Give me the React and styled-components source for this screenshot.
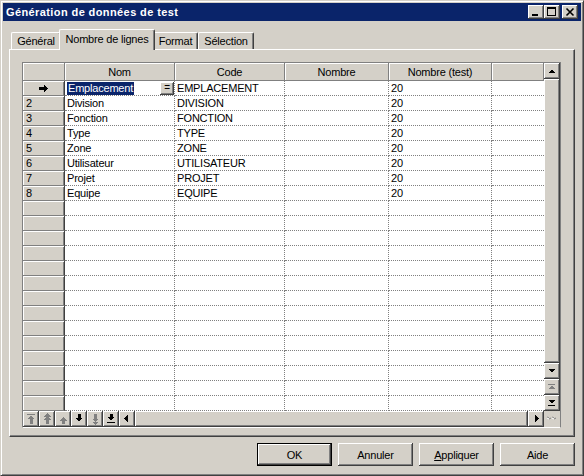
import React from 'react';
import styled, { createGlobalStyle } from 'styled-components';

const GlobalStyle = createGlobalStyle`
  html, body { margin: 0; padding: 0; background: #d4d0c8; }
  body { font-family: "Liberation Sans", Arial, sans-serif; font-size: 11px; color: #000; letter-spacing: -0.2px; }
  * { box-sizing: border-box; }
`;

const raised = `
  background: #d4d0c8;
  box-shadow: inset -1px -1px 0 #404040, inset 1px 1px 0 #fff, inset -2px -2px 0 #808080;
`;

const Window = styled.div`
  width: 584px;
  height: 476px;
  display: flex;
  flex-direction: column;
  border: 1px solid;
  border-color: #d4d0c8 #404040 #404040 #d4d0c8;
  box-shadow: inset 1px 1px 0 #fff, inset -1px -1px 0 #808080;
  padding: 2px;
  background: #d4d0c8;
`;

const TitleBar = styled.div`
  height: 18px;
  flex: none;
  background: #0a246a;
  display: flex;
  align-items: center;
  padding: 0 3px 0 3px;
`;

const Title = styled.div`
  flex: 1;
  color: #fff;
  font-weight: bold;
  font-size: 11px;
  letter-spacing: 0.4px;
  white-space: nowrap;
`;

const CaptionButton = styled.div`
  width: 16px;
  height: 14px;
  ${raised}
  display: flex;
  align-items: center;
  justify-content: center;
  margin-left: ${p => p.$gap || 0}px;
`;

const Body = styled.div`
  flex: 1;
  display: flex;
  flex-direction: column;
  padding: 8px 6px 0 6px;
`;

const TabStrip = styled.div`
  height: 20px;
  display: flex;
  align-items: flex-end;
  padding-left: 2px;
  position: relative;
  z-index: 2;
`;

const Tab = styled.div`
  position: relative;
  width: ${p => p.$w}px;
  height: ${p => (p.$active ? 21 : 17)}px;
  margin: ${p => (p.$active ? '0 -2px -1px -2px' : '0')};
  z-index: ${p => (p.$active ? 2 : 1)};
  background: #d4d0c8;
  border-top: 1px solid #fff;
  border-left: 1px solid #fff;
  border-right: 1px solid #404040;
  border-radius: 2px 2px 0 0;
  box-shadow: inset -1px 0 0 #808080;
  display: flex;
  justify-content: center;
  align-items: flex-start;
  padding-top: ${p => (p.$active ? 3 : 2)}px;
  line-height: 13px;
  white-space: nowrap;
`;

const Panel = styled.div`
  height: 388px;
  flex: none;
  display: flex;
  flex-direction: column;
  border: 1px solid;
  border-color: #fff #404040 #404040 #fff;
  box-shadow: inset -1px -1px 0 #808080;
  padding: 12px 13px 14px 12px;
  position: relative;
  z-index: 1;
`;

const GridFrame = styled.div`
  flex: 1;
  display: flex;
  flex-direction: column;
  border: 1px solid;
  border-color: #808080 #808080 #fff #808080;
  background: #d4d0c8;
`;

const GridMain = styled.div`
  flex: 1;
  display: flex;
  min-height: 0;
`;

const Table = styled.div`
  flex: 1;
  overflow: hidden;
  background: #fff;
  display: grid;
  grid-template-columns: 42px 110px 110px 104px 103px 1fr;
  grid-template-rows: 18px;
  grid-auto-rows: 15px;
  align-content: start;
`;

const HeaderCell = styled.div`
  background: #d4d0c8;
  border-right: 1px solid #808080;
  border-bottom: 1px solid #808080;
  box-shadow: inset 1px 1px 0 #fff;
  display: flex;
  align-items: center;
  justify-content: center;
  white-space: nowrap;
  overflow: hidden;
  line-height: 14px;
`;

const RowHeader = styled.div`
  background: #d4d0c8;
  border-right: 1px solid #404040;
  border-bottom: 1px solid #808080;
  box-shadow: inset 1px 1px 0 #fff, inset -1px 0 0 #808080;
  display: flex;
  align-items: center;
  justify-content: ${p => (p.$current ? 'center' : 'flex-start')};
  padding-left: ${p => (p.$current ? 0 : 3)}px;
  line-height: 14px;
  overflow: hidden;
`;

const Cell = styled.div`
  border-right: ${p => (p.$last ? 'none' : '1px dotted #808080')};
  border-bottom: 1px dotted #808080;
  display: flex;
  align-items: center;
  padding-left: 2px;
  white-space: nowrap;
  overflow: hidden;
  line-height: 14px;
`;

const Selected = styled.span`
  background: #0a246a;
  color: #fff;
  padding: 0 1px;
  line-height: 13px;
`;

const EllipsisButton = styled.div`
  margin-left: auto;
  width: 14px;
  height: 13px;
  flex: none;
  ${raised}
  display: flex;
  align-items: center;
  justify-content: center;
  font-size: 10px;
  line-height: 10px;
  padding-bottom: 1px;
`;

const VScroll = styled.div`
  width: 16px;
  flex: none;
  display: flex;
  flex-direction: column;
`;

const ScrollButton = styled.div`
  width: 16px;
  height: 16px;
  flex: none;
  ${raised}
  display: flex;
`;

const Thumb = styled.div`
  flex: 1;
  ${raised}
`;

const BottomBar = styled.div`
  height: 16px;
  flex: none;
  display: flex;
`;

const Grip = styled.div`
  width: 16px;
  flex: none;
  background: #d4d0c8;
  display: flex;
`;

const ButtonRow = styled.div`
  margin-top: 6px;
  display: flex;
  justify-content: flex-end;
  gap: 6px;
`;

const DlgButton = styled.button`
  width: 75px;
  height: 23px;
  padding: 0;
  margin: 0;
  font: inherit;
  letter-spacing: inherit;
  color: #000;
  background: #d4d0c8;
  display: flex;
  align-items: center;
  justify-content: center;
  border: ${p => (p.$default ? '1px solid #000' : 'none')};
  box-shadow: inset -1px -1px 0 #404040, inset 1px 1px 0 #fff, inset -2px -2px 0 #808080;
  outline: none;
  cursor: default;
`;

const Icon = ({ children, w = 16, h = 16, color = '#000' }) => (
  <svg width={w} height={h} viewBox={`0 0 ${w} ${h}`} fill={color} shapeRendering="crispEdges">
    {children}
  </svg>
);

const GRAY = '#808080';

const navIcons = [
  { color: GRAY, d: 'M4 3h8v1H4z M8 4.5L11.5 8H9.5v5h-3V8H4.5z' },
  { color: GRAY, d: 'M8 2l3.5 3.5h-7z M8 5l3.5 3.5H9.5V13h-3V8.5H4.5z' },
  { color: GRAY, d: 'M8 6l3.5 3.5H9.5V13h-3V9.5H4.5z' },
  { color: '#000', d: 'M6.5 3h3v4h2L8 10.5 4.5 7h2z' },
  { color: GRAY, d: 'M6.5 3h3v4.5h2L8 11 4.5 7.5h2z M4.5 10.5h7L8 14z' },
  { color: '#000', d: 'M6.5 3h3v3h2L8 9.5 4.5 6h2z M4 11h8v1H4z' },
  { color: '#000', d: 'M9 4v7L5 7.5z' },
];

const rows = [
  ['Emplacement', 'EMPLACEMENT', '', '20'],
  ['Division', 'DIVISION', '', '20'],
  ['Fonction', 'FONCTION', '', '20'],
  ['Type', 'TYPE', '', '20'],
  ['Zone', 'ZONE', '', '20'],
  ['Utilisateur', 'UTILISATEUR', '', '20'],
  ['Projet', 'PROJET', '', '20'],
  ['Equipe', 'EQUIPE', '', '20'],
];

const TOTAL_ROWS = 22;

export default function App() {
  const allRows = Array.from({ length: TOTAL_ROWS }, (_, i) => rows[i] || null);
  return (
    <>
      <GlobalStyle />
      <Window>
        <TitleBar>
          <Title>Génération de données de test</Title>
          <CaptionButton>
            <Icon w={14} h={12}><path d="M3 8h6v2H3z" /></Icon>
          </CaptionButton>
          <CaptionButton>
            <Icon w={14} h={12}>
              <path d="M2 1h9v9H2z M3 3v6h7V3z" fillRule="evenodd" />
            </Icon>
          </CaptionButton>
          <CaptionButton $gap={2}>
            <svg width="14" height="12" viewBox="0 0 14 12">
              <path d="M3.5 2.5l7 7 M10.5 2.5l-7 7" stroke="#000" strokeWidth="1.6" />
            </svg>
          </CaptionButton>
        </TitleBar>
        <Body>
          <TabStrip>
            <Tab $w={50}>Général</Tab>
            <Tab $w={96} $active>Nombre de lignes</Tab>
            <Tab $w={45}>Format</Tab>
            <Tab $w={56}>Sélection</Tab>
          </TabStrip>
          <Panel>
            <GridFrame>
              <GridMain>
                <Table>
                  <HeaderCell />
                  <HeaderCell>Nom</HeaderCell>
                  <HeaderCell>Code</HeaderCell>
                  <HeaderCell>Nombre</HeaderCell>
                  <HeaderCell>Nombre (test)</HeaderCell>
                  <HeaderCell />
                  {allRows.map((r, i) => (
                    <React.Fragment key={i}>
                      <RowHeader $current={i === 0}>
                        {i === 0 ? (
                          <Icon w={9} h={7}><path d="M0 2h5V0l4 3.5L5 7V5H0z" /></Icon>
                        ) : r ? (
                          i + 1
                        ) : null}
                      </RowHeader>
                      <Cell>
                        {i === 0 ? (
                          <>
                            <Selected>{r[0]}</Selected>
                            <EllipsisButton>=</EllipsisButton>
                          </>
                        ) : r ? r[0] : null}
                      </Cell>
                      <Cell>{r ? r[1] : null}</Cell>
                      <Cell>{r ? r[2] : null}</Cell>
                      <Cell>{r ? r[3] : null}</Cell>
                      <Cell $last />
                    </React.Fragment>
                  ))}
                </Table>
                <VScroll>
                  <ScrollButton>
                    <Icon><path d="M4 10h7L7.5 6.5z" /></Icon>
                  </ScrollButton>
                  <Thumb />
                  <ScrollButton>
                    <Icon><path d="M4 6h7L7.5 9.5z" /></Icon>
                  </ScrollButton>
                  <ScrollButton>
                    <Icon color={GRAY}><path d="M4 5h7v1H4z M4 10h7L7.5 6.5z" /></Icon>
                  </ScrollButton>
                  <ScrollButton>
                    <Icon><path d="M4 5h7L7.5 8.5z M4 10h7v1H4z" /></Icon>
                  </ScrollButton>
                </VScroll>
              </GridMain>
              <BottomBar>
                {navIcons.map((ic, i) => (
                  <ScrollButton key={i}>
                    <Icon color={ic.color}><path d={ic.d} /></Icon>
                  </ScrollButton>
                ))}
                <Thumb />
                <ScrollButton>
                  <Icon><path d="M7 4v7l4-3.5z" /></Icon>
                </ScrollButton>
                <Grip>
                  <svg width="16" height="16" viewBox="0 0 16 16">
                    <path d="M3 6l2 1 M8 6l2 1 M5 8l2-1 M10 8l2-1" stroke="#808080" strokeWidth="1" />
                    <path d="M3 7l2 1 M8 7l2 1" stroke="#fff" strokeWidth="1" />
                  </svg>
                </Grip>
              </BottomBar>
            </GridFrame>
          </Panel>
          <ButtonRow>
            <DlgButton $default>OK</DlgButton>
            <DlgButton>Annuler</DlgButton>
            <DlgButton><u>A</u>ppliquer</DlgButton>
            <DlgButton>Aide</DlgButton>
          </ButtonRow>
        </Body>
      </Window>
    </>
  );
}
